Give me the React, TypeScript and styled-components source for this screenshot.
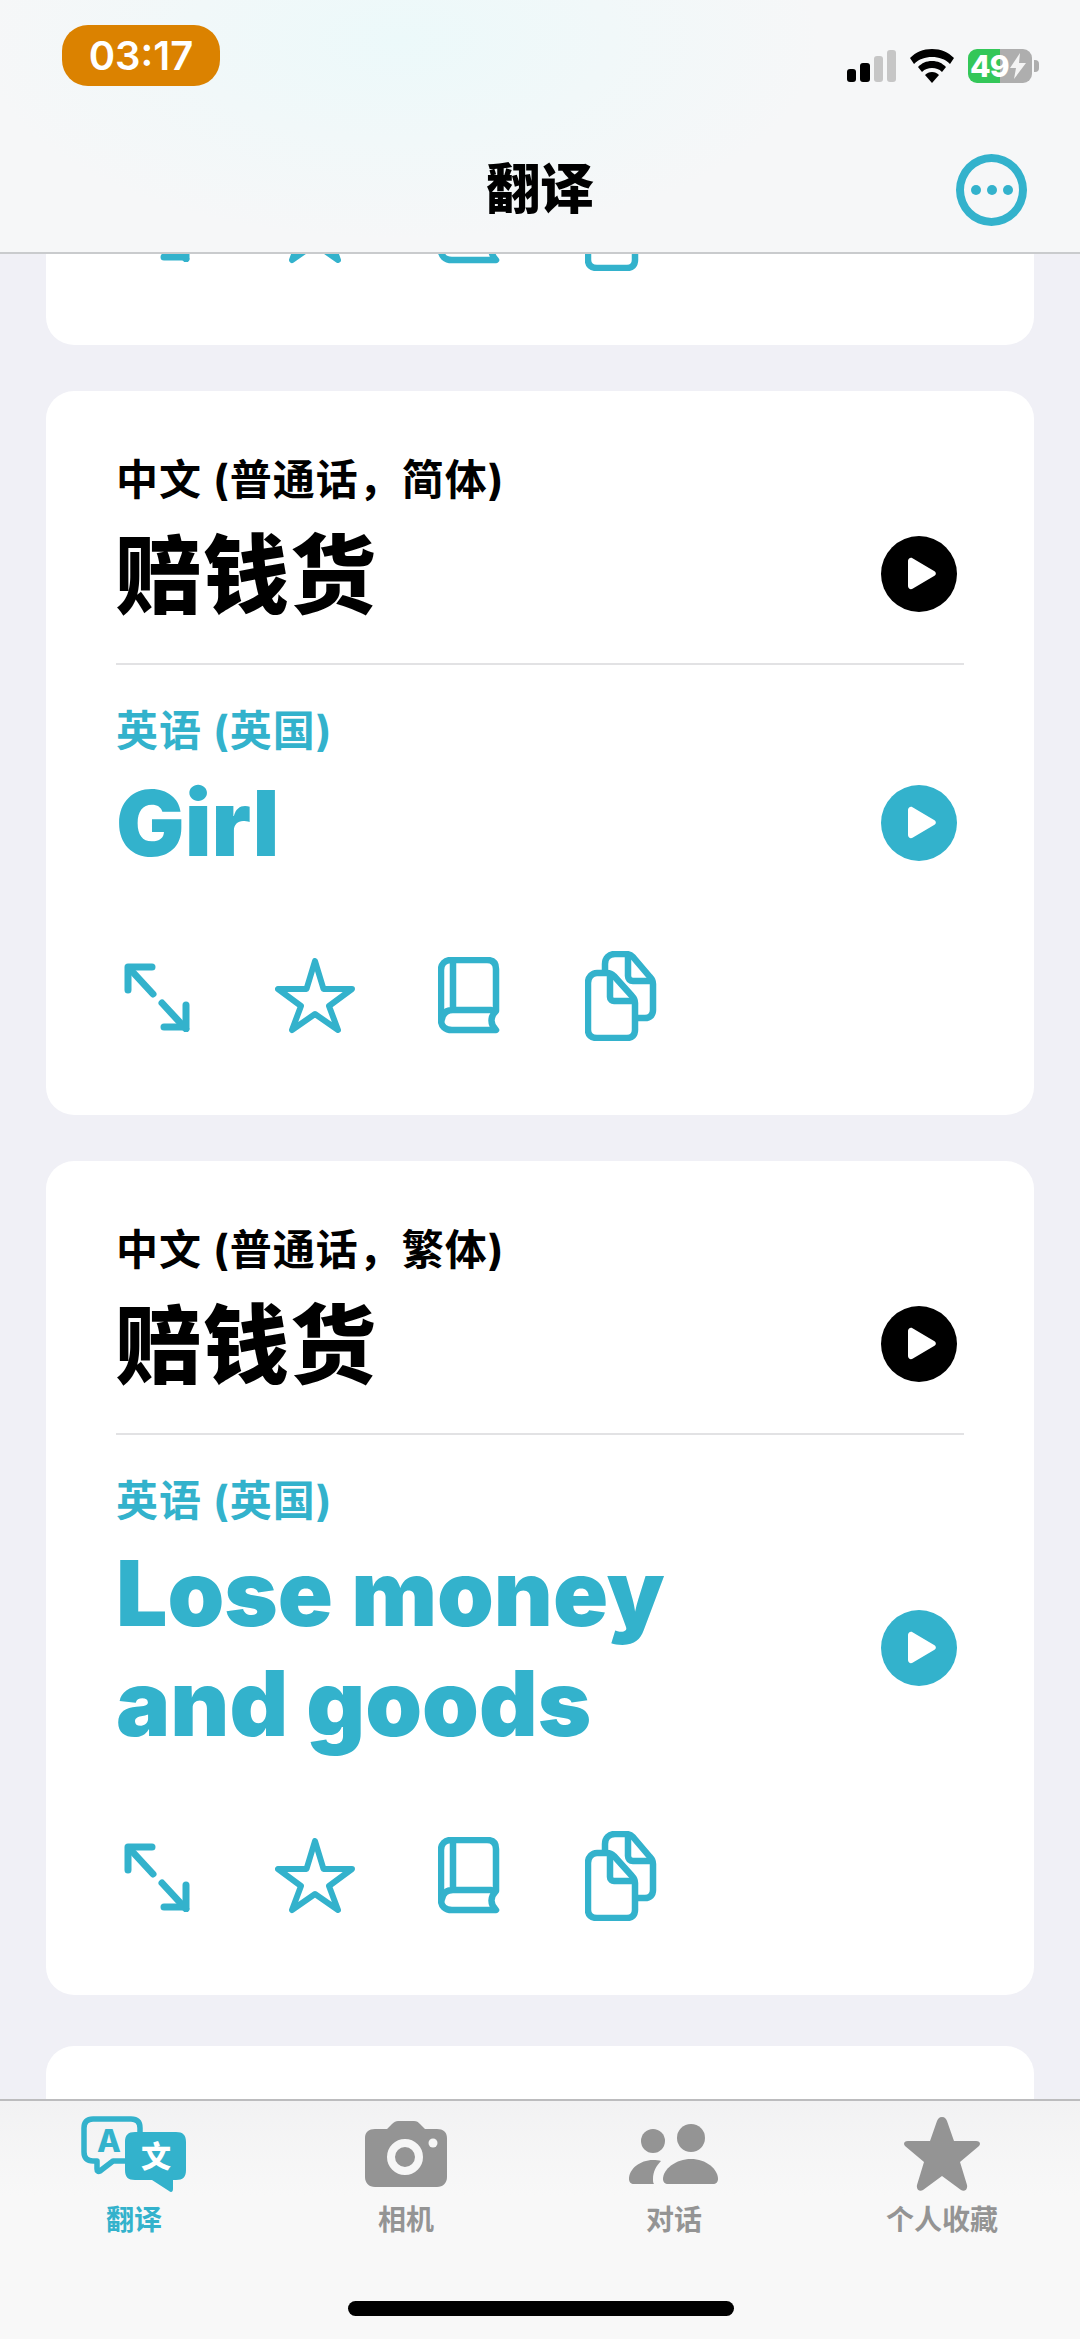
import styled, { createGlobalStyle } from "styled-components";

const ACCENT = "#33b2cc";
const MUTED = "#949494";

const Global = createGlobalStyle`
  html, body {
    margin: 0;
    padding: 0;
    background: #f0f0f6;
  }
  body {
    font-family: Inter, "Noto Sans CJK SC", sans-serif;
  }
`;

const Screen = styled.div`
  position: relative;
  width: 1080px;
  height: 2339px;
  overflow: hidden;
  background: #f0f0f6;
`;

const Header = styled.header`
  position: absolute;
  top: 0;
  left: 0;
  right: 0;
  z-index: 2;
  height: 254px;
  box-sizing: border-box;
  border-bottom: 2px solid #c9cbcd;
  background: radial-gradient(ellipse 420px 200px at 400px 40px, #ecf9fa, #f6f7f8 100%);
`;

const StatusBar = styled.div`
  display: flex;
  justify-content: space-between;
  align-items: flex-start;
  padding: 25px 42px 0 62px;
`;

const TimePill = styled.div`
  width: 158px;
  height: 61px;
  border-radius: 26px;
  background: #db8200;
  color: #fff;
  font-size: 40px;
  font-weight: 600;
  line-height: 61px;
  text-align: center;
`;

const StatusIcons = styled.div`
  display: flex;
  align-items: center;
  gap: 14px;
  padding-top: 24px;
`;

const Battery = styled.div`
  position: relative;
  width: 64px;
  height: 34px;
  margin-right: 6px;
  border-radius: 9px;
  background: linear-gradient(90deg, #34c759 0 50%, #aeaeae 50% 100%);
  color: #fff;
  font-size: 30px;
  font-weight: 800;
  line-height: 34px;
  padding-left: 2px;
  box-sizing: border-box;
  display: flex;
  align-items: center;
  letter-spacing: -1px;
  &::after {
    content: "";
    position: absolute;
    right: -7px;
    top: 11px;
    width: 5px;
    height: 12px;
    border-radius: 0 4px 4px 0;
    background: #aeaeae;
  }
`;

const NavBar = styled.div`
  position: relative;
  display: flex;
  justify-content: center;
  align-items: center;
  height: 90px;
  margin-top: 59px;
`;

const Title = styled.h1`
  margin: 0;
  font-size: 54px;
  font-weight: 900;
  color: #000;
  line-height: 60px;
`;

const MoreButton = styled.div`
  position: absolute;
  right: 53px;
  top: 9px;
  width: 71px;
  height: 72px;
  box-sizing: border-box;
  border: 8px solid ${ACCENT};
  border-radius: 50%;
  display: flex;
  align-items: center;
  justify-content: center;
  gap: 6px;
`;

const Dot = styled.span`
  width: 10px;
  height: 10px;
  border-radius: 50%;
  background: ${ACCENT};
`;

const Feed = styled.main`
  display: flex;
  flex-direction: column;
  gap: 46px;
  padding: 181px 46px 0;
`;

const Card = styled.section`
  background: #fff;
  border-radius: 28px;
  padding: 0 70px 74px;
`;

const PeekCard = styled(Card)`
  height: 120px;
  margin-top: 5px;
`;

const LangBlock = styled.div`
  padding: 64px 0 34px;
`;

const TranslationBlock = styled.div`
  padding: 41px 0 73px;
  border-top: 2px solid #e2e2e4;
`;

const Language = styled.div<{ $accent?: boolean }>`
  font-size: 42px;
  font-weight: 700;
  line-height: 50px;
  letter-spacing: 1px;
  color: ${(p) => (p.$accent ? ACCENT : "#000")};
`;

const PhraseRow = styled.div<{ $gap: number }>`
  display: flex;
  align-items: center;
  justify-content: space-between;
  padding-right: 7px;
  margin-top: ${(p) => p.$gap}px;
`;

const SourcePhrase = styled.div`
  padding-top: 4px;
  font-size: 86px;
  font-weight: 900;
  line-height: 106px;
  letter-spacing: 1px;
  color: #000;
`;

const TargetPhrase = styled.div`
  font-size: 91px;
  font-weight: 900;
  line-height: 110px;
  color: ${ACCENT};
`;

const PlayButton = styled.div<{ $accent?: boolean }>`
  flex: none;
  width: 76px;
  height: 76px;
  border-radius: 50%;
  background: ${(p) => (p.$accent ? ACCENT : "#000")};
  display: flex;
  align-items: center;
  justify-content: center;
`;

const Actions = styled.div`
  display: flex;
  align-items: center;
  height: 90px;
  padding-left: 7px;
`;

const ActionSlot = styled.div<{ $width: number }>`
  width: ${(p) => p.$width}px;
  display: flex;
`;

const TabBar = styled.nav`
  position: absolute;
  left: 0;
  right: 0;
  bottom: 0;
  z-index: 2;
  height: 240px;
  box-sizing: border-box;
  border-top: 2px solid #bcbcbe;
  background: linear-gradient(#f2f2f3, #f8f8f8 40%);
  padding-top: 13px;
`;

const TabRow = styled.div`
  display: grid;
  grid-template-columns: 268px 276px 260px 276px;
`;

const Tab = styled.div<{ $active?: boolean }>`
  display: flex;
  flex-direction: column;
  align-items: center;
  color: ${(p) => (p.$active ? ACCENT : MUTED)};
`;

const TabIcon = styled.div`
  height: 80px;
  display: flex;
  align-items: center;
  justify-content: center;
`;

const TabLabel = styled.div`
  margin-top: 9px;
  font-size: 28px;
  font-weight: 700;
  line-height: 34px;
`;

const HomeIndicator = styled.div`
  position: absolute;
  left: 348px;
  bottom: 23px;
  width: 386px;
  height: 15px;
  border-radius: 8px;
  background: #000;
`;

function PlayIcon() {
  return (
    <svg width="34" height="34" viewBox="0 0 34 34">
      <path
        d="M6 4c0-2.5 2.5-4 4.5-2.8l22 13c1.8 1 1.8 3.6 0 4.6l-22 13C8.5 33 6 31.5 6 29z"
        fill="#fff"
      />
    </svg>
  );
}

function ExpandIcon() {
  return (
    <svg width="70" height="72" viewBox="0 0 70 72" fill="none" stroke={ACCENT} strokeWidth="7" strokeLinecap="round" strokeLinejoin="round">
      <path d="M5 30V7h24" />
      <path d="M6 8l24 26" />
      <path d="M39 43l24 26" />
      <path d="M63 45v22H41" />
    </svg>
  );
}

function StarIcon() {
  return (
    <svg width="80" height="76" viewBox="0 0 80 76" fill="none" stroke={ACCENT} strokeWidth="6" strokeLinejoin="round">
      <path d="M40 3l8.500 28H77L54 48l9 24-23-16-23 16 9-24L3 31h28.500z" />
    </svg>
  );
}

function BookIcon() {
  return (
    <svg width="62" height="78" viewBox="0 0 62 78" fill="none" stroke={ACCENT} strokeWidth="6.500" strokeLinecap="round" strokeLinejoin="round">
      <path d="M58 73H14C7 73 3 69 3 63V13C3 7 7 3 13 3h36c6 0 9 3 9 9v42c-6 6-6 13 0 19z" />
      <path d="M15 4v49M4 62c1-6 5-9 11-9h38" />
    </svg>
  );
}

function CopyIcon() {
  return (
    <svg width="72" height="90" viewBox="0 0 72 90" fill="none" stroke={ACCENT} strokeWidth="6.500" strokeLinejoin="round">
      <path d="M20 22v-9c0-6 4-10 10-10h11c3 0 5 1 7 3l17 20c2 2 3 4 3 7v26c0 5-3 8-8 8h-9" />
      <path d="M43 4v21c0 3 2 5 5 5h19" />
      <path d="M3 32c0-6 4-10 9-10h10c3 0 5 1 7 3l18 20c2 2 3 4 3 7v27c0 5-3 8-8 8H12c-6 0-9-3-9-8z" />
      <path d="M25 23v23c0 3 2 4 4 4h20" />
    </svg>
  );
}

function ActionRow() {
  return (
    <Actions>
      <ActionSlot $width={152}>
        <ExpandIcon />
      </ActionSlot>
      <ActionSlot $width={163}>
        <StarIcon />
      </ActionSlot>
      <ActionSlot $width={147}>
        <BookIcon />
      </ActionSlot>
      <ActionSlot $width={72}>
        <CopyIcon />
      </ActionSlot>
    </Actions>
  );
}

function SignalIcon() {
  return (
    <svg width="49" height="32" viewBox="0 0 49 32">
      <rect x="0" y="19" width="9" height="13" rx="3" fill="#000" />
      <rect x="13" y="13" width="10" height="19" rx="3" fill="#000" />
      <rect x="27" y="6" width="9" height="26" rx="3" fill="#c6c6c6" />
      <rect x="40" y="0" width="9" height="32" rx="3" fill="#c6c6c6" />
    </svg>
  );
}

function WifiIcon() {
  return (
    <svg width="44" height="34" viewBox="0 0 44 34">
      <path d="M22 0C13 0 6 3 0 9l4 6c5-5 11-7 18-7s13 2 18 7l4-6C38 3 31 0 22 0z" fill="#000" />
      <path d="M22 12c-6 0-10 2-14 6l4 5c3-3 6-4 10-4s7 1 10 4l4-5c-4-4-8-6-14-6z" fill="#000" />
      <path d="M22 23c-3 0-5 1-7 3l7 8 7-8c-2-2-4-3-7-3z" fill="#000" />
    </svg>
  );
}

function BoltIcon() {
  return (
    <svg width="18" height="26" viewBox="0 0 18 26">
      <path d="M11 0L1 15h6l-2 11 12-16h-7z" fill="#f4f4f4" />
    </svg>
  );
}

function TranslateTabIcon() {
  return (
    <svg width="108" height="80" viewBox="0 0 108 80">
      <path
        d="M13 5h38c6 0 9 3 9 9v24c0 6-3 9-9 9H33L20 57c-2 1-3 0-3-2v-8h-4c-6 0-9-3-9-9V14c0-6 3-9 9-9z"
        fill="none"
        stroke={ACCENT}
        strokeWidth="5.500"
        strokeLinejoin="round"
      />
      <text x="29" y="38" fontSize="31" fontWeight="800" fill={ACCENT} textAnchor="middle" fontFamily="Inter">
        A
      </text>
      <path
        d="M55 18h41c7 0 10 3 10 10v28c0 7-3 10-10 10h-3v9c0 3-2 4-4 2L72 66H55c-7 0-10-3-10-10V28c0-7 3-10 10-10z"
        fill={ACCENT}
      />
      <text x="76" y="53" fontSize="30" fontWeight="900" fill="#fff" textAnchor="middle" fontFamily="Noto Sans CJK SC">
        文
      </text>
    </svg>
  );
}

function CameraTabIcon() {
  return (
    <svg width="82" height="66" viewBox="0 0 82 66">
      <path
        d="M10 8h12l5-5c2-2 4-3 6-3h16c3 0 4 1 6 3l5 5h12c6 0 10 3 10 9v39c0 6-4 10-10 10H10C4 66 0 62 0 56V17c0-6 4-9 10-9z"
        fill={MUTED}
      />
      <circle cx="40" cy="36" r="14" fill="none" stroke="#f6f6f6" strokeWidth="8" />
      <circle cx="68" cy="22" r="4.500" fill="#f6f6f6" />
    </svg>
  );
}

function PeopleTabIcon() {
  return (
    <svg width="92" height="62" viewBox="0 0 92 62">
      <circle cx="25" cy="18" r="12" fill={MUTED} />
      <circle cx="63" cy="15" r="14" fill={MUTED} />
      <path d="M1 56c0-10 11-19 24-19 3 0 6 0 8 1-5 5-8 11-8 18 0 2 0 4 1 5H6c-3 0-5-2-5-5z" fill={MUTED} />
      <path d="M63 36c15 0 27 10 27 20 0 3-2 5-5 5H40c-3 0-5-2-5-5 0-10 13-20 28-20z" fill={MUTED} />
    </svg>
  );
}

function StarTabIcon() {
  return (
    <svg width="76" height="74" viewBox="0 0 76 74">
      <path
        d="M38 0c3 0 4 2 5 4l7 20h22c4 0 5 3 3 5L56 45l7 23c1 5-3 7-6 5L38 59 19 73c-3 2-7 0-6-5l7-23L1 29c-2-2-1-5 3-5h22l7-20c1-2 2-4 5-4z"
        fill={MUTED}
      />
    </svg>
  );
}

type Entry = {
  source: string;
  target: string;
  translation: string[];
};

const entries: Entry[] = [
  { source: "中文 (普通话，简体)", target: "英语 (英国)", translation: ["Girl"] },
  { source: "中文 (普通话，繁体)", target: "英语 (英国)", translation: ["Lose money", "and goods"] },
];

export default function App() {
  return (
    <>
      <Global />
      <Screen>
        <Header>
          <StatusBar>
            <TimePill>03:17</TimePill>
            <StatusIcons>
              <SignalIcon />
              <WifiIcon />
              <Battery>
                49
                <BoltIcon />
              </Battery>
            </StatusIcons>
          </StatusBar>
          <NavBar>
            <Title>翻译</Title>
            <MoreButton>
              <Dot />
              <Dot />
              <Dot />
            </MoreButton>
          </NavBar>
        </Header>
        <Feed>
          <Card>
            <ActionRow />
          </Card>
          {entries.map((entry) => (
            <Card key={entry.source}>
              <LangBlock>
                <Language>{entry.source}</Language>
                <PhraseRow $gap={14}>
                  <SourcePhrase>赔钱货</SourcePhrase>
                  <PlayButton>
                    <PlayIcon />
                  </PlayButton>
                </PhraseRow>
              </LangBlock>
              <TranslationBlock>
                <Language $accent>{entry.target}</Language>
                <PhraseRow $gap={12}>
                  <TargetPhrase>
                    {entry.translation.map((line) => (
                      <div key={line}>{line}</div>
                    ))}
                  </TargetPhrase>
                  <PlayButton $accent>
                    <PlayIcon />
                  </PlayButton>
                </PhraseRow>
              </TranslationBlock>
              <ActionRow />
            </Card>
          ))}
          <PeekCard />
        </Feed>
        <TabBar>
          <TabRow>
            <Tab $active>
              <TabIcon>
                <TranslateTabIcon />
              </TabIcon>
              <TabLabel>翻译</TabLabel>
            </Tab>
            <Tab>
              <TabIcon>
                <CameraTabIcon />
              </TabIcon>
              <TabLabel>相机</TabLabel>
            </Tab>
            <Tab>
              <TabIcon>
                <PeopleTabIcon />
              </TabIcon>
              <TabLabel>对话</TabLabel>
            </Tab>
            <Tab>
              <TabIcon>
                <StarTabIcon />
              </TabIcon>
              <TabLabel>个人收藏</TabLabel>
            </Tab>
          </TabRow>
          <HomeIndicator />
        </TabBar>
      </Screen>
    </>
  );
}
